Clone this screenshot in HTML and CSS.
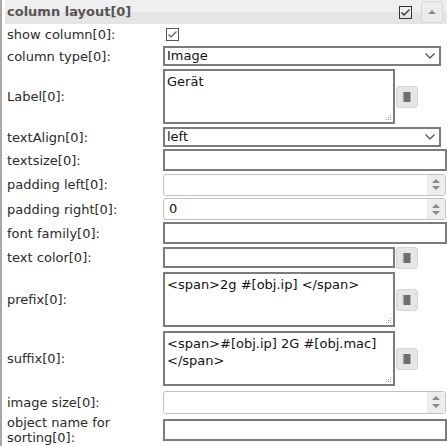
FILE: index.html
```html
<!DOCTYPE html>
<html>
<head>
<meta charset="utf-8">
<link rel="stylesheet" href="styles.css">
</head>
<body>
<div class="panel">
  <div class="header">
    <span class="title">column layout[0]</span>
    <svg class="hcheck" width="13" height="13" viewBox="0 0 13 13"><rect x="0.5" y="0.5" width="12" height="12" fill="none" stroke="#333"/><path d="M2.5 6.5 L5 9 L10.5 3.5" fill="none" stroke="#333" stroke-width="1.3"/></svg>
    <span class="hbtn"><svg width="8" height="5" viewBox="0 0 8 5"><path d="M0 5 L4 1 L8 5 Z" fill="#8a8a8a"/></svg></span>
  </div>
  <div class="form">
    <div class="lbl">show column[0]:</div>
    <div class="fld"><svg class="cbox" width="13" height="13" viewBox="0 0 13 13"><rect x="0.5" y="0.5" width="12" height="12" fill="#fff" stroke="#555"/><path d="M2.5 6.5 L5 9 L10.5 3.5" fill="none" stroke="#555" stroke-width="1.2"/></svg></div>

    <div class="lbl">column type[0]:</div>
    <div class="fld"><div class="select"><span>Image</span><svg width="10" height="6" viewBox="0 0 10 6"><path d="M0.5 0.5 L5 5 L9.5 0.5" fill="none" stroke="#444" stroke-width="1.1"/></svg></div></div>

    <div class="lbl">Label[0]:</div>
    <div class="fld"><span class="awrap"><textarea class="area">Gerät</textarea><svg class="grip" width="7" height="7" viewBox="0 0 7 7"><g fill="#a0a0a0"><rect x="5" y="1" width="1" height="1"/><rect x="3" y="3" width="1" height="1"/><rect x="5" y="3" width="1" height="1"/><rect x="1" y="5" width="1" height="1"/><rect x="3" y="5" width="1" height="1"/><rect x="5" y="5" width="1" height="1"/></g></svg></span><span class="bbtn"><svg width="22" height="22" viewBox="0 0 22 22"><rect x="7.5" y="6" width="7" height="10" fill="#6e6e6e"/><line x1="7" y1="6" x2="7" y2="16" stroke="#aaa" stroke-dasharray="1 1"/></svg></span></div>

    <div class="lbl">textAlign[0]:</div>
    <div class="fld"><div class="select"><span>left</span><svg width="10" height="6" viewBox="0 0 10 6"><path d="M0.5 0.5 L5 5 L9.5 0.5" fill="none" stroke="#444" stroke-width="1.1"/></svg></div></div>

    <div class="lbl">textsize[0]:</div>
    <div class="fld"><div class="text"></div></div>

    <div class="lbl">padding left[0]:</div>
    <div class="fld"><div class="spin"><span class="val"></span><span class="arrows"><svg width="8" height="5" viewBox="0 0 8 5"><path d="M0 5 L4 1 L8 5 Z" fill="#8a8a8a"/></svg><svg width="8" height="5" viewBox="0 0 8 5"><path d="M0 0 L4 4 L8 0 Z" fill="#8a8a8a"/></svg></span></div></div>

    <div class="lbl">padding right[0]:</div>
    <div class="fld"><div class="spin"><span class="val">0</span><span class="arrows"><svg width="8" height="5" viewBox="0 0 8 5"><path d="M0 5 L4 1 L8 5 Z" fill="#8a8a8a"/></svg><svg width="8" height="5" viewBox="0 0 8 5"><path d="M0 0 L4 4 L8 0 Z" fill="#8a8a8a"/></svg></span></div></div>

    <div class="lbl">font family[0]:</div>
    <div class="fld"><div class="text"></div></div>

    <div class="lbl">text color[0]:</div>
    <div class="fld"><div class="text short"></div><span class="bbtn"><svg width="22" height="22" viewBox="0 0 22 22"><rect x="7.5" y="6" width="7" height="10" fill="#6e6e6e"/><line x1="7" y1="6" x2="7" y2="16" stroke="#aaa" stroke-dasharray="1 1"/></svg></span></div>

    <div class="lbl">prefix[0]:</div>
    <div class="fld"><span class="awrap"><textarea class="area">&lt;span&gt;2g #[obj.ip] &lt;/span&gt;</textarea><svg class="grip" width="7" height="7" viewBox="0 0 7 7"><g fill="#a0a0a0"><rect x="5" y="1" width="1" height="1"/><rect x="3" y="3" width="1" height="1"/><rect x="5" y="3" width="1" height="1"/><rect x="1" y="5" width="1" height="1"/><rect x="3" y="5" width="1" height="1"/><rect x="5" y="5" width="1" height="1"/></g></svg></span><span class="bbtn"><svg width="22" height="22" viewBox="0 0 22 22"><rect x="7.5" y="6" width="7" height="10" fill="#6e6e6e"/><line x1="7" y1="6" x2="7" y2="16" stroke="#aaa" stroke-dasharray="1 1"/></svg></span></div>

    <div class="lbl">suffix[0]:</div>
    <div class="fld"><span class="awrap"><textarea class="area">&lt;span&gt;#[obj.ip] 2G #[obj.mac] &lt;/span&gt;</textarea><svg class="grip" width="7" height="7" viewBox="0 0 7 7"><g fill="#a0a0a0"><rect x="5" y="1" width="1" height="1"/><rect x="3" y="3" width="1" height="1"/><rect x="5" y="3" width="1" height="1"/><rect x="1" y="5" width="1" height="1"/><rect x="3" y="5" width="1" height="1"/><rect x="5" y="5" width="1" height="1"/></g></svg></span><span class="bbtn"><svg width="22" height="22" viewBox="0 0 22 22"><rect x="7.5" y="6" width="7" height="10" fill="#6e6e6e"/><line x1="7" y1="6" x2="7" y2="16" stroke="#aaa" stroke-dasharray="1 1"/></svg></span></div>

    <div class="lbl">image size[0]:</div>
    <div class="fld"><div class="spin tall"><span class="val"></span><span class="arrows"><svg width="8" height="5" viewBox="0 0 8 5"><path d="M0 5 L4 1 L8 5 Z" fill="#8a8a8a"/></svg><svg width="8" height="5" viewBox="0 0 8 5"><path d="M0 0 L4 4 L8 0 Z" fill="#8a8a8a"/></svg></span></div></div>

    <div class="lbl">object name for sorting[0]:</div>
    <div class="fld"><div class="text"></div></div>
  </div>
</div>
</body>
</html>
```

FILE: styles.css
```css
html, body {
  margin: 0;
  padding: 0;
  background: #fff;
}
body {
  font-family: "DejaVu Sans", Verdana, sans-serif;
  font-size: 13px;
  color: #2a2a2a;
}
.panel {
  border-left: 2px solid #a8a8a8;
  padding-left: 3px;
  height: 446px;
  box-sizing: border-box;
}
.header {
  height: 24px;
  display: flex;
  align-items: center;
  padding: 0 4px 0 2px;
  background: linear-gradient(#efefef 0, #efefef 50%, #e5e5e5 50%, #e5e5e5 100%);
}
.title {
  font-weight: bold;
  color: #555;
  line-height: 16px;
}
.hcheck {
  margin-left: auto;
  margin-right: 9px;
  display: block;
}
.hbtn {
  width: 22px;
  height: 22px;
  box-sizing: border-box;
  border: 1px solid #d6d6d6;
  border-radius: 3px;
  background: #ececec;
  display: flex;
  align-items: center;
  justify-content: center;
}
.hbtn svg { display: block; margin-top: -1px; }
.form {
  display: grid;
  padding-left: 2px;
  grid-template-columns: 156px 284px;
  grid-template-rows: 21px 22px 59px 22px 24px 25px 24px 24px 25px 59px 59px 28px 28px;
}
.lbl {
  align-self: center;
  line-height: 15px;
  color: #2a2a2a;
}
.fld {
  display: flex;
  align-items: center;
}
.cbox {
  display: block;
  margin-left: 3px;
}
.select {
  width: 278px;
  height: 20px;
  box-sizing: border-box;
  border: 2px solid #7b7b7b;
  padding: 0 4px 0 2px;
  display: flex;
  align-items: center;
  justify-content: space-between;
  line-height: 16px;
  color: #111;
}
.select svg { display: block; }
.text {
  width: 284px;
  height: 22px;
  box-sizing: border-box;
  border: 2px solid #7b7b7b;
}
.text.short {
  width: 232px;
  height: 21px;
}
.awrap {
  position: relative;
  display: block;
  width: 232px;
  height: 55px;
}
.area {
  display: block;
  width: 232px;
  height: 55px;
  box-sizing: border-box;
  border: 2px solid #7b7b7b;
  padding: 2px 2px;
  margin: 0;
  font-family: "DejaVu Sans", Verdana, sans-serif;
  font-size: 13px;
  line-height: 17px;
  color: #111;
  background: #fff;
  overflow: hidden;
  outline: none;
  resize: none;
}
.grip {
  position: absolute;
  right: 3px;
  bottom: 3px;
  display: block;
}
.bbtn {
  width: 22px;
  height: 22px;
  box-sizing: border-box;
  border: 1px solid #d3d3d3;
  border-radius: 3px;
  background: #e6e6e6;
  margin-left: 1px;
  display: flex;
  align-items: center;
  justify-content: center;
}
.bbtn svg { display: block; margin: -1px; }
.spin {
  width: 283px;
  height: 22px;
  box-sizing: border-box;
  border: 1px solid #c2c2c2;
  border-radius: 3px;
  display: flex;
  overflow: hidden;
}
.spin.tall { height: 23px; }
.val {
  flex: 1;
  padding-left: 5px;
  line-height: 20px;
  color: #111;
}
.arrows {
  width: 18px;
  background: #ededed;
  display: flex;
  flex-direction: column;
  align-items: center;
  justify-content: space-around;
  padding: 2px 0;
  box-sizing: border-box;
}
.arrows svg { display: block; }
```
